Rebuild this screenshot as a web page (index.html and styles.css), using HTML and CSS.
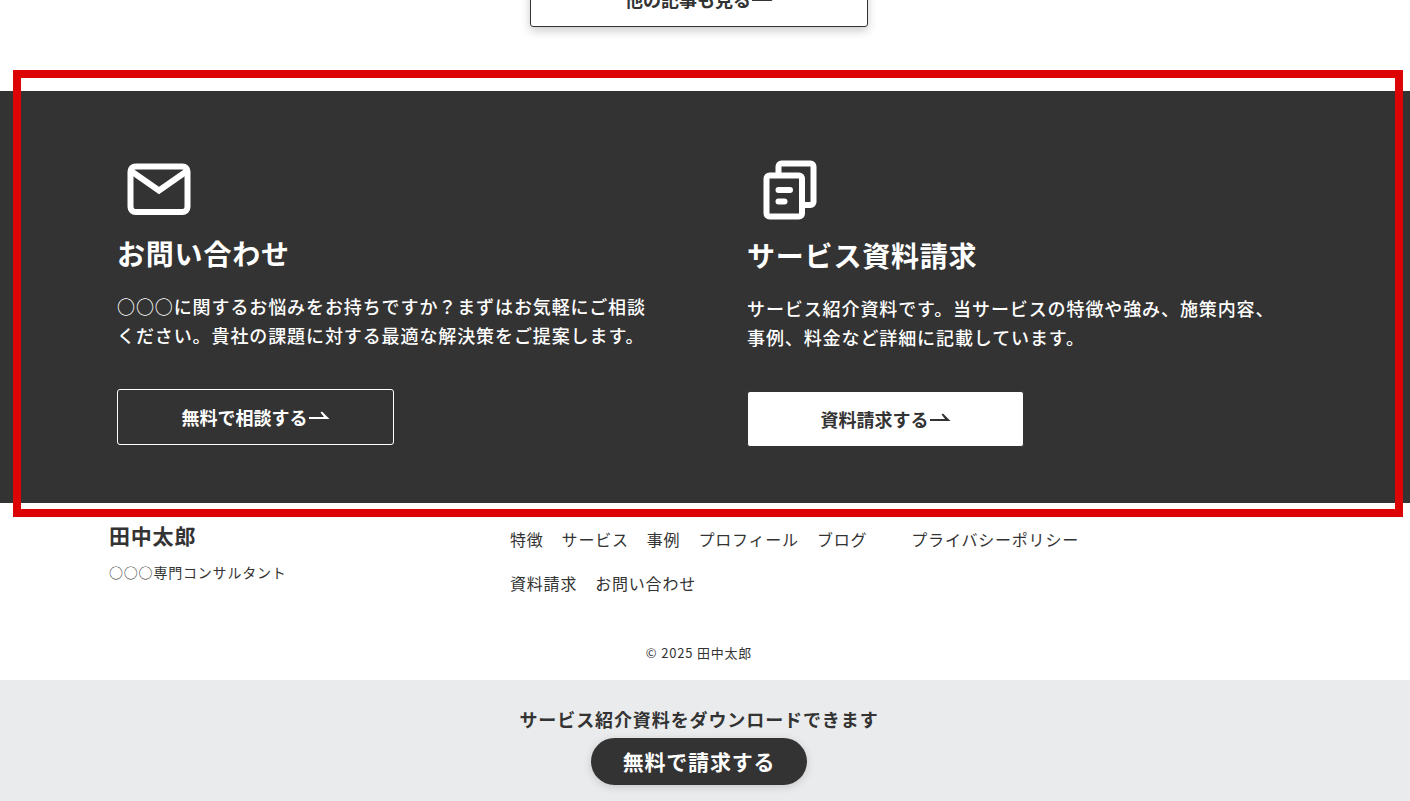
FILE: index.html
```html
<!DOCTYPE html>
<html lang="ja">
<head>
    <meta charset="UTF-8">
    <meta name="viewport" content="width=device-width, initial-scale=1.0">
    <title>田中太郎</title>
    <link rel="stylesheet" href="styles.css">
</head>
<body>
    <section class="more">
        <a href="#" class="btn btn-more">他の記事も見る<svg class="arrow" width="22" height="12" viewBox="0 0 22 12" aria-hidden="true"><path d="M1 6H16L12.5 1.5L14 0.5L21.5 8H1Z"/></svg></a>
    </section>

    <section class="contact">
        <div class="contact-inner">
            <div class="contact-item">
                <svg class="icon" width="84" height="84" viewBox="0 0 84 84" aria-hidden="true">
                    <rect x="13.5" y="19.5" width="57" height="45.5" rx="5"/>
                    <path d="M14 24L42 43.5L70 24"/>
                </svg>
                <h2>お問い合わせ</h2>
                <p>○○○に関するお悩みをお持ちですか？まずはお気軽にご相談ください。貴社の課題に対する最適な解決策をご提案します。</p>
                <a href="#" class="btn btn-outline">無料で相談する<svg class="arrow" width="22" height="12" viewBox="0 0 22 12" aria-hidden="true"><path d="M1 6H16L12.5 1.5L14 0.5L21.5 8H1Z"/></svg></a>
            </div>
            <div class="contact-item">
                <svg class="icon" width="86" height="86" viewBox="0 0 86 86" aria-hidden="true">
                    <path d="M31.5 29V19.5a3 3 0 0 1 3-3H63.5a3 3 0 0 1 3 3V55a3 3 0 0 1-3 3H55"/>
                    <rect x="19.5" y="28.5" width="35.5" height="41" rx="3"/>
                    <path class="line" d="M31.5 43H43M31.5 54.5H37.5"/>
                </svg>
                <h2>サービス資料請求</h2>
                <p>サービス紹介資料です。当サービスの特徴や強み、施策内容、事例、料金など詳細に記載しています。</p>
                <a href="#" class="btn btn-white">資料請求する<svg class="arrow" width="22" height="12" viewBox="0 0 22 12" aria-hidden="true"><path d="M1 6H16L12.5 1.5L14 0.5L21.5 8H1Z"/></svg></a>
            </div>
        </div>
        <div class="frame"></div>
    </section>

    <footer class="footer">
        <div class="footer-inner">
            <div class="footer-name">
                <p class="name">田中太郎</p>
                <p class="job">○○○専門コンサルタント</p>
            </div>
            <nav class="footer-nav">
                <a href="#">特徴</a>
                <a href="#">サービス</a>
                <a href="#">事例</a>
                <a href="#">プロフィール</a>
                <a href="#">ブログ</a>
                <a href="#" class="policy">プライバシーポリシー</a>
                <a href="#">資料請求</a>
                <a href="#">お問い合わせ</a>
            </nav>
        </div>
        <p class="copyright">© 2025 田中太郎</p>
    </footer>

    <div class="download">
        <p>サービス紹介資料をダウンロードできます</p>
        <a href="#" class="btn-download">無料で請求する</a>
    </div>
</body>
</html>
```

FILE: styles.css
```css
* {
    box-sizing: border-box;
}
body {
    margin: 0;
    color: #333;
    background: #fff;
    font-family: "Noto Sans CJK JP", sans-serif;
    font-size: 16px;
    letter-spacing: 0.05em;
}
h2,
p {
    margin: 0;
}
a {
    color: inherit;
    text-decoration: none;
}

/* ボタン */
.btn {
    display: flex;
    align-items: center;
    justify-content: center;
    width: 277px;
    height: 56px;
    border: 1px solid #333;
    border-radius: 3px;
    font-size: 18px;
    font-weight: bold;
    letter-spacing: 0;
}
.arrow {
    fill: currentColor;
}
.btn-more {
    width: 338px;
    box-shadow: 0 4px 10px rgba(0, 0, 0, 0.2);
}
.btn-outline {
    border-color: #fff;
}
.btn-white {
    color: #333;
    background: #fff;
}

/* 他の記事 */
.more {
    display: flex;
    justify-content: center;
    margin-top: -29px;
    padding: 0 12px 64px 0;
}

/* お問い合わせ・資料請求 */
.contact {
    position: relative;
    padding: 56px 12px 56px 0;
    color: #fff;
    background: #333;
}
.contact-inner {
    display: grid;
    grid-template-columns: 1fr 1fr;
    gap: 96px;
    max-width: 1164px;
    margin: 0 auto;
}
.icon {
    display: block;
    fill: none;
    stroke: #fff;
    stroke-width: 6;
}
.icon .line {
    stroke-linecap: round;
}
.contact h2 {
    margin-bottom: 17px;
    font-size: 28px;
    line-height: 44px;
}
.contact p {
    margin-bottom: 39px;
    font-size: 18px;
    font-weight: 500;
    line-height: 29px;
    letter-spacing: 0.05em;
}
.frame {
    position: absolute;
    top: -21px;
    right: 7px;
    bottom: -14px;
    left: 13px;
    border: 8px solid #dc0404;
    pointer-events: none;
}

/* フッター */
.footer {
    padding: 16px 12px 16px 0;
}
.footer-inner {
    display: grid;
    grid-template-columns: 401px minmax(0, 600px);
    max-width: 1180px;
    margin: 0 auto;
}
.name {
    margin-bottom: 9px;
    font-size: 21px;
    font-weight: bold;
    line-height: 32px;
}
.job {
    font-size: 14px;
    line-height: 24px;
}
.footer-nav {
    display: flex;
    flex-wrap: wrap;
    column-gap: 18px;
    margin-top: -2px;
    line-height: 44px;
}
.policy {
    margin-left: 26px;
}
.copyright {
    margin-top: 37px;
    font-size: 13px;
    line-height: 22px;
    text-align: center;
}

/* 資料ダウンロード */
.download {
    display: flex;
    flex-direction: column;
    align-items: center;
    gap: 5px;
    padding: 26px 12px 16px 0;
    background: #eaebed;
}
.download p {
    font-size: 18px;
    font-weight: bold;
    line-height: 27px;
    letter-spacing: 0.05em;
}
.btn-download {
    padding: 0 32px;
    border-radius: 24px;
    color: #fff;
    background: #333;
    box-shadow: 0 2px 8px rgba(0, 0, 0, 0.15);
    font-size: 21px;
    font-weight: bold;
    line-height: 47px;
}
```
